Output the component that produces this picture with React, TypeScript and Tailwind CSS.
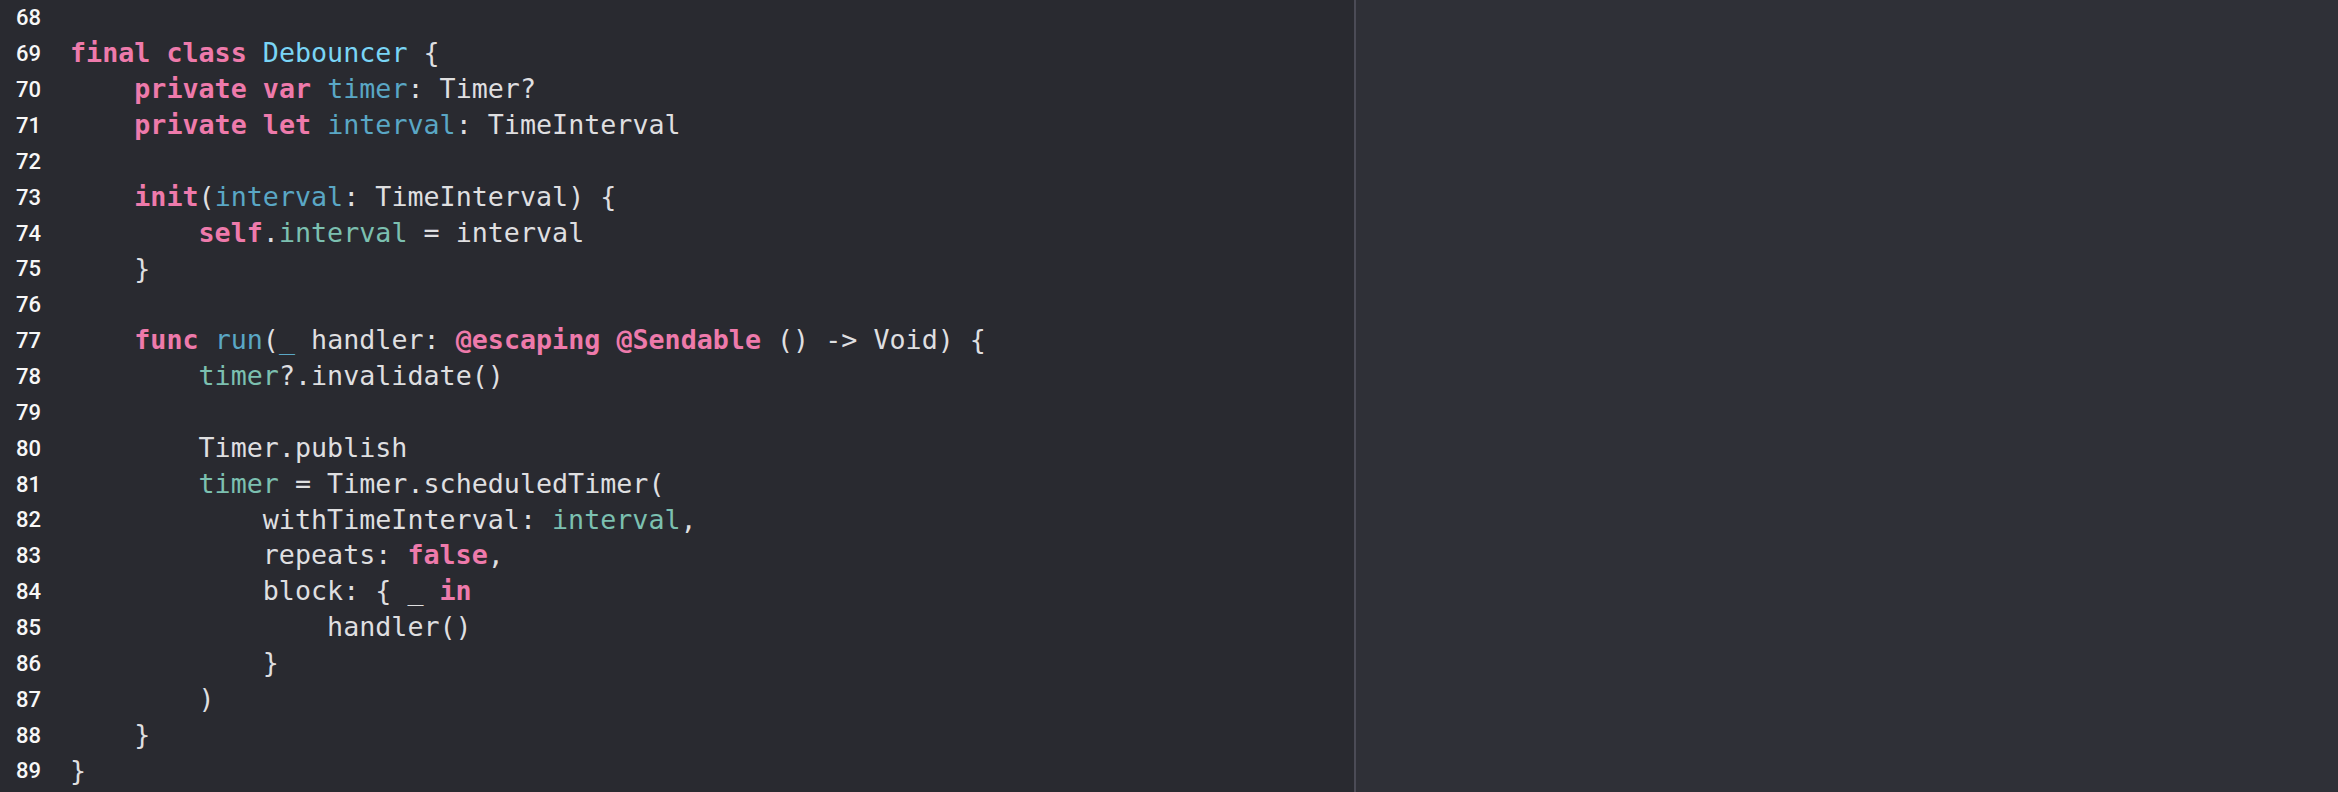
type Kind = "p" | "k" | "t" | "d" | "v";

const color: Record<Kind, string> = {
  p: "text-[#dfdfe0]",
  k: "text-[#ee7aab] font-bold",
  t: "text-[#7ad5f6]",
  d: "text-[#5aa7c5]",
  v: "text-[#7cc0b0]",
};

type Tok = [string, Kind];

const lines: Tok[][] = [
  [],
  [["final", "k"], [" ", "p"], ["class", "k"], [" ", "p"], ["Debouncer", "t"], [" {", "p"]],
  [["    ", "p"], ["private", "k"], [" ", "p"], ["var", "k"], [" ", "p"], ["timer", "d"], [": Timer?", "p"]],
  [["    ", "p"], ["private", "k"], [" ", "p"], ["let", "k"], [" ", "p"], ["interval", "d"], [": TimeInterval", "p"]],
  [],
  [["    ", "p"], ["init", "k"], ["(", "p"], ["interval", "d"], [": TimeInterval) {", "p"]],
  [["        ", "p"], ["self", "k"], [".", "p"], ["interval", "v"], [" = interval", "p"]],
  [["    }", "p"]],
  [],
  [
    ["    ", "p"],
    ["func", "k"],
    [" ", "p"],
    ["run", "d"],
    ["(", "p"],
    ["_", "d"],
    [" handler: ", "p"],
    ["@escaping", "k"],
    [" ", "p"],
    ["@Sendable", "k"],
    [" () -> Void) {", "p"],
  ],
  [["        ", "p"], ["timer", "v"], ["?.invalidate()", "p"]],
  [],
  [["        Timer.publish", "p"]],
  [["        ", "p"], ["timer", "v"], [" = Timer.scheduledTimer(", "p"]],
  [["            withTimeInterval: ", "p"], ["interval", "v"], [",", "p"]],
  [["            repeats: ", "p"], ["false", "k"], [",", "p"]],
  [["            block: { _ ", "p"], ["in", "k"]],
  [["                handler()", "p"]],
  [["            }", "p"]],
  [["        )", "p"]],
  [["    }", "p"]],
  [["}", "p"]],
];

export default function App() {
  return (
    <div className="flex h-screen w-full overflow-hidden bg-[#2f3037]">
      <div className="w-[1354px] shrink-0 bg-[#292a30]">
        {lines.map((toks, i) => (
          <div key={i} className="flex h-[35.87px] items-center">
            <span className="w-[70px] shrink-0 pl-[16px] text-[22px] font-medium text-[#f7f7f7] [font-family:Roboto,'Noto_Sans',sans-serif]">
              {68 + i}
            </span>
            <pre className="m-0 whitespace-pre text-[26.7px] leading-none [font-family:'DejaVu_Sans_Mono','Liberation_Mono',monospace]">
              {toks.map(([text, kind], j) => (
                <span key={j} className={color[kind]}>
                  {text}
                </span>
              ))}
            </pre>
          </div>
        ))}
      </div>
      <div className="w-[2px] shrink-0 bg-[#4b4b56]" />
      <div className="flex-1 bg-[#2f3037]" />
    </div>
  );
}
